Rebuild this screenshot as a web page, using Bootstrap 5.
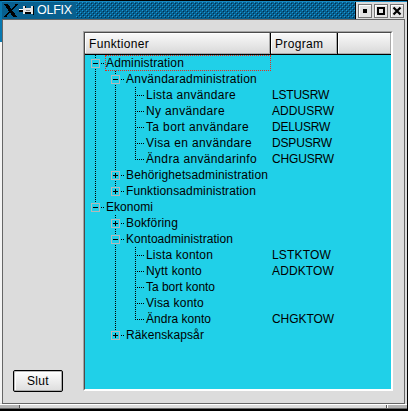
<!DOCTYPE html>
<html lang="sv">
<head>
<meta charset="utf-8">
<title>OLFIX</title>
<link href="https://cdn.jsdelivr.net/npm/bootstrap@5.3.0/dist/css/bootstrap.min.css" rel="stylesheet">
<style>
body{width:408px;height:411px;overflow:hidden;background:#000;font:12px/16px "Liberation Sans",Arial,sans-serif;color:#000;letter-spacing:.35px}
.win{width:408px;height:411px;border-top:1px solid #000;border-right:1px solid #000;border-bottom:2px solid #000;background:#dcdcdc}
.title{height:18px;border-top:1px solid #1888c0;background:#08608f;padding-left:4px}
.title .name{color:#fff;font-size:12.5px;line-height:17px;letter-spacing:-.25px;margin-left:3px;width:37px}
.dots{height:16px;margin-left:4px}
.ctl{background:#dcdcdc;border-left:1px solid #000;width:52px;padding:2px 0 0 2px;gap:2px;height:18px}
.cb{width:14px;height:14px;border:1px solid #777;background:#e4e4e4;box-shadow:inset 1px 1px #fff}
.client{height:385px;border:1px solid #666;margin:0 2px 0 2px}
.side{width:80px;padding:0 0 11px 10px}
.btn.slut{width:50px;height:22px;border:1px solid #000;border-radius:2px;padding:0;font:inherit;letter-spacing:.3px;line-height:20px;color:#000;background:linear-gradient(#fff,#ddd);box-shadow:inset 1px 1px #bbb,inset -1px -1px #aaa,inset 2px 2px #fff}
.tree{width:310px;height:360px;margin-top:11px;border:1px solid;border-color:#a4a4a4 #fff #fff #a4a4a4}
.tree-in{height:358px;border:1px solid;border-color:#4c4c4c #fff #fff #4c4c4c;background:#20d0e8}
.head{height:22px;border-bottom:1px solid #000;background:linear-gradient(#fafafa,#d8d8d8);line-height:22px}
.head div{border-right:1px solid #000;padding-left:4px;box-shadow:inset -1px -1px #aaa,inset 1px 1px #fff}
.h1c{width:186px}.h2c{width:67px}.head .h3c{width:53px;border:0}
.tr{height:16px}
.fn{width:186px;white-space:nowrap}
.g{width:20px;height:16px;flex:none}
.v,.b,.e{background:repeating-linear-gradient(#000 0 1px,transparent 1px 2px) 10px 0/1px 16px no-repeat}
.b,.e{background:repeating-linear-gradient(#000 0 1px,transparent 1px 2px) 10px 0/1px 16px no-repeat,repeating-linear-gradient(90deg,#000 0 1px,transparent 1px 2px) 12px 8px/8px 1px no-repeat}
.e{background-size:1px 9px,8px 1px}
.g svg{display:block}
.lab{padding-left:1px;line-height:17px;display:block;height:16px}
.focusbox{outline:1px dotted #e03020;outline-offset:-1px;width:166px;margin-right:-1px}
.pg{padding-left:1px;line-height:17px;height:16px}
.foot{height:5px;border-top:1px solid #fff;border-bottom:1px solid #666}
.grip{width:20px;background:#b4b4b4;border-right:1px solid #555}
.grip.r{width:21px;border-right:0;border-left:1px solid #555;box-shadow:inset 1px 0 #fff}
.edge{position:absolute;left:0;top:1px;width:2px;height:41px;background:#0878b0}
.edge2{position:absolute;left:0;top:42px;width:2px;height:361px;background:#f4f4f4}
</style>
<script src="https://cdn.jsdelivr.net/npm/bootstrap@5.3.0/dist/js/bootstrap.bundle.min.js"></script>
</head>
<body>
<div class="win d-flex flex-column">
 <div class="title d-flex">
  <svg class="flex-shrink-0" width="30" height="17" shape-rendering="crispEdges"><path d="M0 2h4l9 13H9z" fill="#000"/><path d="M13 2L1 15" stroke="#000" stroke-width="1.6"/><path d="M15 7h4v1h-4z" fill="#fff"/><path d="M15 8h4v2h-4zM21 10h6v2h-6zM29 4h1v9h-1zM21 4h1v3h-1z" fill="#000"/><path d="M19 4h2v8h-2zM21 6h6v4h-6zM27 4h2v8h-2z" fill="#e4e4e4"/><path d="M22 8h4v1h-4z" fill="#888"/></svg>
  <span class="name">OLFIX</span>
  <svg class="dots flex-fill" height="16"><defs><pattern id="p" width="4" height="4" patternUnits="userSpaceOnUse"><path fill="#1898d8" d="M0 2h1v1H0zM2 0h1v1H2z"/><path fill="#043050" d="M1 3h1v1H1zM3 1h1v1H3z"/></pattern></defs><rect width="100%" height="16" fill="url(#p)"/></svg>
  <div class="ctl d-flex flex-shrink-0">
   <div class="cb"><svg class="d-block" width="12" height="12"><path d="M4 4h4v4H4z"/></svg></div>
   <div class="cb"><svg class="d-block" width="12" height="12"><path d="M3 3h6v6H3z" fill="none" stroke="#000" stroke-width="2"/></svg></div>
   <div class="cb"><svg class="d-block" width="12" height="12"><path d="M2.5 2.5l7 7M9.5 2.5l-7 7" stroke="#000" stroke-width="2.2"/></svg></div>
  </div>
 </div>
 <div class="client d-flex">
  <div class="side d-flex align-items-end"><button class="btn slut">Slut</button></div>
  <div class="tree"><div class="tree-in">
   <div class="head d-flex"><div class="h1c">Funktioner</div><div class="h2c">Program</div><div class="h3c"></div></div>
   <div id="rows"></div>
  </div></div>
 </div>
 <div class="foot d-flex justify-content-between"><div class="grip"></div><div class="grip r"></div></div>
</div>
<div class="edge"></div><div class="edge2"></div>
<script>
const box=(plus,up,down)=>`<span class="g"><svg width="20" height="16" shape-rendering="crispEdges"><path d="M10.5 ${up?0:8}V${down?16:8}" stroke="#000" stroke-dasharray="1 1"/><path d="M6.5 4.5h8v8h-8z" fill="#20d0e8" stroke="#b4b8b8"/><path d="M8 8.5h5${plus?'M10.5 6v5':''}" stroke="#000"/><path d="M16 8.5h4" stroke="#000" stroke-dasharray="1 1"/></svg></span>`;
const cell={v:'<span class="g v"></span>',b:'<span class="g b"></span>',e:'<span class="g e"></span>',n:'<span class="g"></span>',
 m:box(0,1,1),M:box(0,1,0),p:box(1,1,1),P:box(1,1,0)};
// guide cells, label, label width, program, program width
const rows=[['m','Administration',78],['vm','Användaradministration',131],
['vvb','Lista användare',90,'LSTUSRW',57],['vvb','Ny användare',79,'ADDUSRW',62],['vvb','Ta bort användare',103,'DELUSRW',58],['vvb','Visa en användare',106,'DSPUSRW',60],['vve','Ändra användarinfo',111,'CHGUSRW',62],
['vp','Behörighetsadministration',142],['vP','Funktionsadministration',130],['M','Ekonomi',47],['np','Bokföring',52],['nm','Kontoadministration',107],
['nvb','Lista konton',67,'LSTKTOW',59],['nvb','Nytt konto',56,'ADDKTOW',62],['nvb','Ta bort konto',69],['nvb','Visa konto',58],['nve','Ändra konto',65,'CHGKTOW',62],['nP','Räkenskapsår',78]];
const fit=(t,w)=>t?`<span class="fit" data-w="${w}">${t}</span>`:'';
document.getElementById('rows').innerHTML=rows.map((r,i)=>`<div class="tr d-flex"><div class="fn d-flex">${[...r[0]].map(c=>cell[c]).join('')}<span class="lab${i?'':' focusbox'}">${fit(r[1],r[2])}</span></div><div class="pg">${fit(r[3],r[4])}</div></div>`).join('');
document.querySelectorAll('.fit').forEach(s=>{s.style.letterSpacing='0px';s.style.letterSpacing=(s.dataset.w-s.getBoundingClientRect().width)/s.textContent.length+'px';});
</script>
</body>
</html>
